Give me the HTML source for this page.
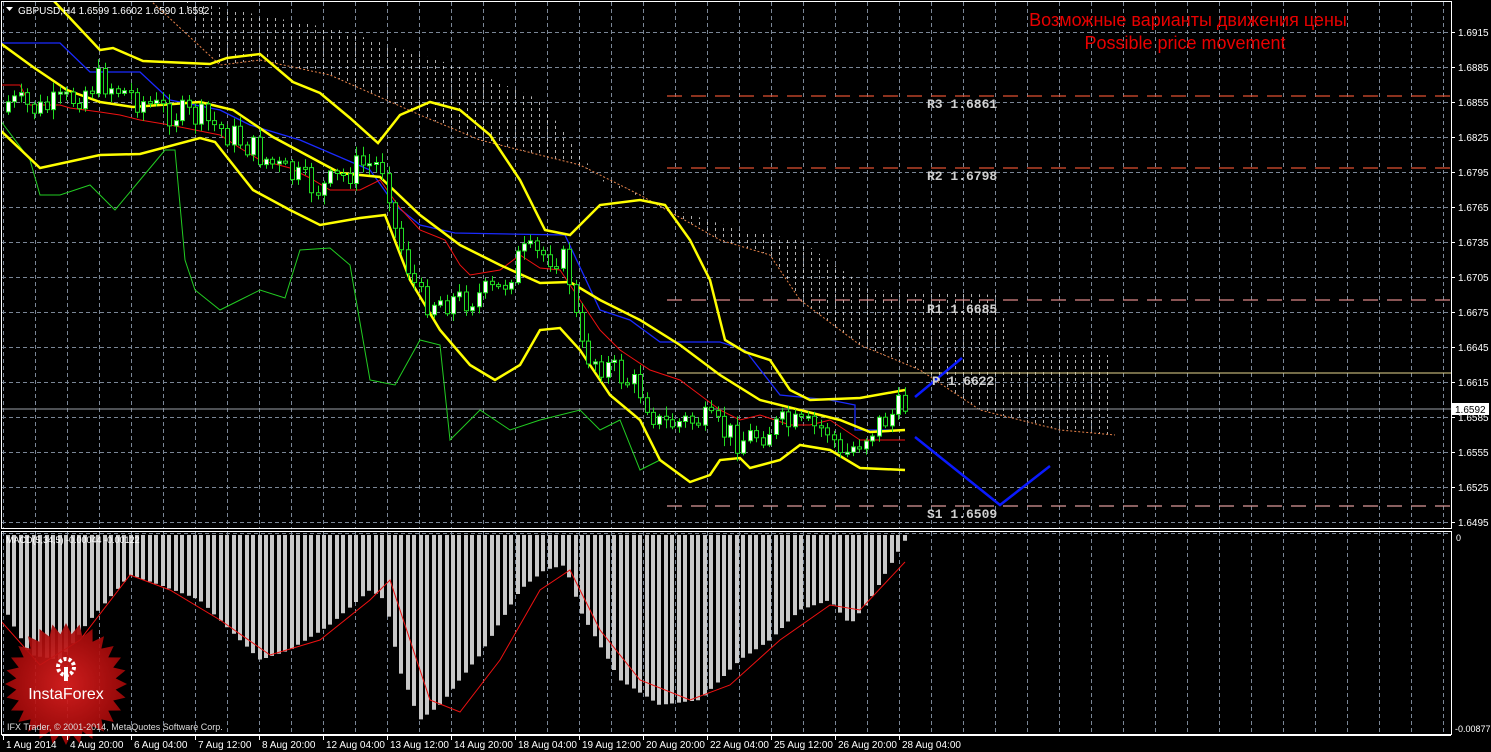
<!DOCTYPE html>
<html><head><meta charset="utf-8"><style>
html,body{margin:0;padding:0;background:#000;width:1491px;height:752px;overflow:hidden}
svg{display:block}
.sans{font-family:"Liberation Sans",sans-serif}
.mono{font-family:"Liberation Mono",monospace}
</style></head><body>
<svg id="s" width="1491" height="752" xmlns="http://www.w3.org/2000/svg">
<defs>
<pattern id="cl" width="8" height="6" patternUnits="userSpaceOnUse"><rect x="3" y="0" width="1" height="3" fill="#ddd"/></pattern>
<clipPath id="mc"><rect x="2" y="2" width="1449" height="526"/></clipPath>
<clipPath id="hc"><rect x="2" y="531" width="1449" height="203"/></clipPath>
<radialGradient id="lg"><stop offset="0" stop-color="#e02020"/><stop offset="1" stop-color="#a00808"/></radialGradient>
</defs>
<rect width="1491" height="752" fill="#000"/>
<g id="grid" stroke="#7a8696" stroke-dasharray="4,3" stroke-width="1"></g>
<g clip-path="url(#mc)">
<path d="M180,0 L340,30 L470,70 L540,100 L600,180 L660,205 L740,230 L800,240 L870,290 L1000,295 L1010,355 L1115,355 L1115,435 L1060,430 L980,410 L920,370 L860,345 L800,300 L770,255 L720,240 L640,195 L580,165 L480,140 L420,115 L330,75 L260,60 L220,65 Z" fill="url(#cl)" opacity="0.8"/>
<polyline fill="none" stroke="#e8834a" stroke-width="1" stroke-dasharray="2,2" points="150,0 220,65 260,60 330,75 420,115 480,140 580,165 640,195 720,240 770,255 800,300 860,345 920,370 980,410 1060,430 1115,435"/>
<g stroke="#e05030" stroke-dasharray="15,9" stroke-width="1.3">
<line x1="667" y1="96" x2="1451" y2="96"/><line x1="667" y1="168" x2="1451" y2="168"/><line x1="667" y1="300" x2="1451" y2="300" stroke="#d88"/><line x1="667" y1="506" x2="1451" y2="506" stroke="#d99"/>
</g>
<line x1="667" y1="373" x2="1451" y2="373" stroke="#e8d890"/>
<line x1="2" y1="409" x2="1451" y2="409" stroke="#9aa0a8"/>
<polyline fill="none" stroke="#22cc22" stroke-width="1" points="0,120 30,160 40,195 60,195 90,185 115,210 140,180 165,150 175,150 185,260 195,290 220,310 240,300 260,290 285,298 300,250 330,248 350,265 370,380 395,385 420,340 440,345 450,440 480,410 510,430 540,420 580,410 600,430 620,420 640,470 660,460"/>
<polyline fill="none" stroke="#1a2aff" stroke-width="1.3" points="0,43 60,43 90,72 140,72 170,100 220,110 250,125 300,140 370,170 395,205 420,225 455,233 565,235 600,310 630,320 660,342 720,342 745,350 780,395 830,400 855,405 855,430 905,430"/>
<polyline fill="none" stroke="#ee1111" stroke-width="1" points="0,85 20,85 30,105 60,105 70,108 100,112 120,115 140,120 170,125 195,130 220,135 240,148 260,160 290,168 310,178 330,190 360,190 380,180 400,208 420,230 445,240 460,265 470,275 500,270 520,255 540,268 560,270 580,300 600,330 620,350 650,370 680,380 700,395 720,410 740,420 760,415 790,425 810,425 830,420 860,440 905,440"/>
<polyline fill="none" stroke="#ffff00" stroke-width="2.5" points="40,-5 53,0 100,50 113,48 143,61 210,64 227,58 260,54 293,82 320,93 350,118 378,143 400,115 430,102 460,110 490,135 520,180 545,230 570,235 600,205 640,200 665,205 690,240 710,280 725,340 745,352 770,360 790,390 810,400 860,398 905,390"/>
<polyline fill="none" stroke="#ffff00" stroke-width="2.5" points="0,43 33,67 67,90 100,102 133,107 200,102 233,110 273,137 340,173 380,177 420,215 460,245 500,265 540,283 570,282 600,300 640,320 680,345 720,375 760,400 800,410 840,420 870,432 905,430"/>
<polyline fill="none" stroke="#ffff00" stroke-width="2.5" points="0,130 40,168 100,155 140,154 200,138 215,142 253,190 290,210 320,225 360,218 385,215 410,280 440,330 470,365 495,380 520,365 540,330 560,328 580,350 610,395 640,420 660,460 690,482 710,475 720,460 740,458 750,468 780,460 800,445 830,450 860,468 905,470"/>
<path id="wicks" fill="none" stroke="#22dd22" stroke-width="1"/>
<path id="bw" fill="#fff" stroke="#22dd22" stroke-width="1"/>
<path id="bb" fill="#000" stroke="#22dd22" stroke-width="1"/>
<polyline fill="none" stroke="#0a1aff" stroke-width="2.5" points="915,397 962,358"/>
<polyline fill="none" stroke="#0a1aff" stroke-width="2.5" points="915,437 1000,505 1050,466"/>
</g>
<g class="mono" font-size="13" fill="#d0d0d0" font-weight="bold">
<text x="927" y="108">R3 1.6861</text><text x="927" y="180">R2 1.6798</text><text x="927" y="313">R1 1.6685</text><text x="932" y="385">P 1.6622</text><text x="927" y="518">S1 1.6509</text>
</g>
<text class="sans" x="1188" y="26" font-size="18" fill="#e80000" text-anchor="middle">Возможные варианты движения цены</text>
<text class="sans" x="1185" y="49" font-size="18" fill="#e80000" text-anchor="middle">Possible price movement</text>
<path d="M6,7 L13,7 L9.5,11 Z" fill="#fff"/>
<text class="sans" x="18" y="14" font-size="10" fill="#fff">GBPUSD,H4  1.6599 1.6602 1.6590 1.6592</text>
<g clip-path="url(#hc)">
<path id="hist" fill="#c8c8c8"/>
<polyline fill="none" stroke="#ee1111" stroke-width="1" points="0,620 40,665 80,640 130,575 170,590 220,620 270,655 320,640 370,600 390,580 410,640 430,700 460,712 500,660 540,590 570,570 600,630 640,680 690,700 730,685 780,640 830,605 860,610 905,562"/>
</g>
<text class="sans" x="6" y="543" font-size="9" fill="#fff">MACD(5,34,5) -0.00044 -0.00122</text>
<g transform="translate(66,684)">
<polygon id="star" fill="url(#lg)" opacity="0.92"/>
<circle cx="0" cy="-17" r="8" fill="none" stroke="#fff" stroke-width="4" stroke-dasharray="3,2"/>
<rect x="-2" y="-17" width="4" height="14" fill="#fff"/>
<text class="sans" x="0" y="15" font-size="16" fill="#fff" text-anchor="middle">InstaForex</text>
</g>
<text class="sans" x="7" y="730" font-size="9" fill="#ddd">IFX Trader, © 2001-2014, MetaQuotes Software Corp.</text>
<rect x="1.5" y="1.5" width="1450" height="527" fill="none" stroke="#fff"/>
<rect x="1.5" y="531.5" width="1450" height="203" fill="none" stroke="#fff"/>
<g id="axis" class="sans" font-size="10" fill="#fff"></g>
<rect x="1451" y="403" width="38" height="12" fill="#fff"/>
<text class="sans" x="1455" y="413" font-size="10" fill="#000">1.6592</text>
<text class="sans" x="1456" y="541" font-size="9" fill="#fff">0</text>
<text class="sans" x="1455" y="732" font-size="9" fill="#fff">-0.00877</text>
</svg>
<script>
(function(){
var NS="http://www.w3.org/2000/svg";
function el(p,t,a){var e=document.createElementNS(NS,t);for(var k in a)e.setAttribute(k,a[k]);p.appendChild(e);return e;}
var g=document.getElementById('grid');
var ax=document.getElementById('axis');
for(var gx=3;gx<1451;gx+=32){el(g,'line',{x1:gx+.5,y1:2,x2:gx+.5,y2:528});el(g,'line',{x1:gx+.5,y1:532,x2:gx+.5,y2:734});}
for(var i=0;i<15;i++){var gy=32+i*35;el(g,'line',{x1:2,y1:gy+.5,x2:1451,y2:gy+.5});
 el(ax,'line',{x1:1451,y1:gy+.5,x2:1455,y2:gy+.5,stroke:'#fff'});
 var t=el(ax,'text',{x:1458,y:gy+4});t.textContent=(1.6915-i*0.003).toFixed(4);}
el(g,'line',{x1:2,y1:533.5,x2:1451,y2:533.5});
var dl=["1 Aug 2014","4 Aug 20:00","6 Aug 04:00","7 Aug 12:00","8 Aug 20:00","12 Aug 04:00","13 Aug 12:00","14 Aug 20:00","18 Aug 04:00","19 Aug 12:00","20 Aug 20:00","22 Aug 04:00","25 Aug 12:00","26 Aug 20:00","28 Aug 04:00"];
for(var i=0;i<dl.length;i++){var dx=3+i*64;el(ax,'line',{x1:dx+.5,y1:735,x2:dx+.5,y2:740,stroke:'#fff'});var t2=el(ax,'text',{x:dx+3,y:748});t2.textContent=dl[i];}
el(ax,'line',{x1:2,y1:735.5,x2:1451,y2:735.5,stroke:'#fff'});
function interp(P,x){for(var i=0;i<P.length-1;i++){if(x>=P[i][0]&&x<=P[i+1][0]){var f=(x-P[i][0])/(P[i+1][0]-P[i][0]);return P[i][1]+f*(P[i+1][1]-P[i][1]);}}return P[P.length-1][1];}
var MB=[[0,100],[40,110],[70,100],[100,80],[130,95],[160,110],[200,118],[240,140],[280,170],[320,190],[360,165],[385,165],[395,230],[420,300],[460,300],[500,290],[520,255],[560,255],[570,280],[580,350],[620,375],[640,390],[660,425],[700,420],[740,440],[780,425],[830,430],[840,460],[870,430],[905,405]];
var seed=7;function rnd(){seed=(seed*9301+49297)%233280;return seed/233280;}
var W="",BW="",BB="";var prev=interp(MB,8)+10;
for(var cx=8;cx<=906;cx+=6.45){
 var c=interp(MB,cx)+(rnd()-0.5)*30;var o=prev;prev=c;
 var tp=Math.min(o,c),bt=Math.max(o,c);if(bt-tp<2)bt=tp+2;
 var xx=Math.round(cx)+0.5;
 W+="M"+xx+","+(tp-2-rnd()*8).toFixed(1)+"V"+(bt+2+rnd()*8).toFixed(1);
 var r="M"+(xx-2)+","+tp.toFixed(1)+"h4V"+bt.toFixed(1)+"h-4Z";
 if(c<o)BW+=r;else BB+=r;
}
document.getElementById('wicks').setAttribute('d',W);
document.getElementById('bw').setAttribute('d',BW);
document.getElementById('bb').setAttribute('d',BB);
var HP=[[0,600],[30,655],[60,660],[90,620],[130,575],[160,585],[200,600],[240,640],[260,660],[290,650],[330,625],[370,590],[385,600],[400,670],[420,720],[440,705],[480,655],[520,590],[545,570],[565,565],[580,610],[620,680],[660,705],[700,700],[740,660],[770,640],[800,610],[830,600],[850,625],[870,600],[905,540]];
var H="";for(var hx=8;hx<=906;hx+=6.45){var hy=interp(HP,hx);H+="M"+(Math.round(hx)-2)+",535h4V"+hy.toFixed(1)+"h-4Z";}
document.getElementById('hist').setAttribute('d',H);
var sp=[];for(var i=0;i<56;i++){var a=i*Math.PI/28,rr=(i%2)?50:61;sp.push((rr*Math.sin(a)).toFixed(1)+','+(-rr*Math.cos(a)).toFixed(1));}
document.getElementById('star').setAttribute('points',sp.join(' '));
})();
</script>
</body></html>
